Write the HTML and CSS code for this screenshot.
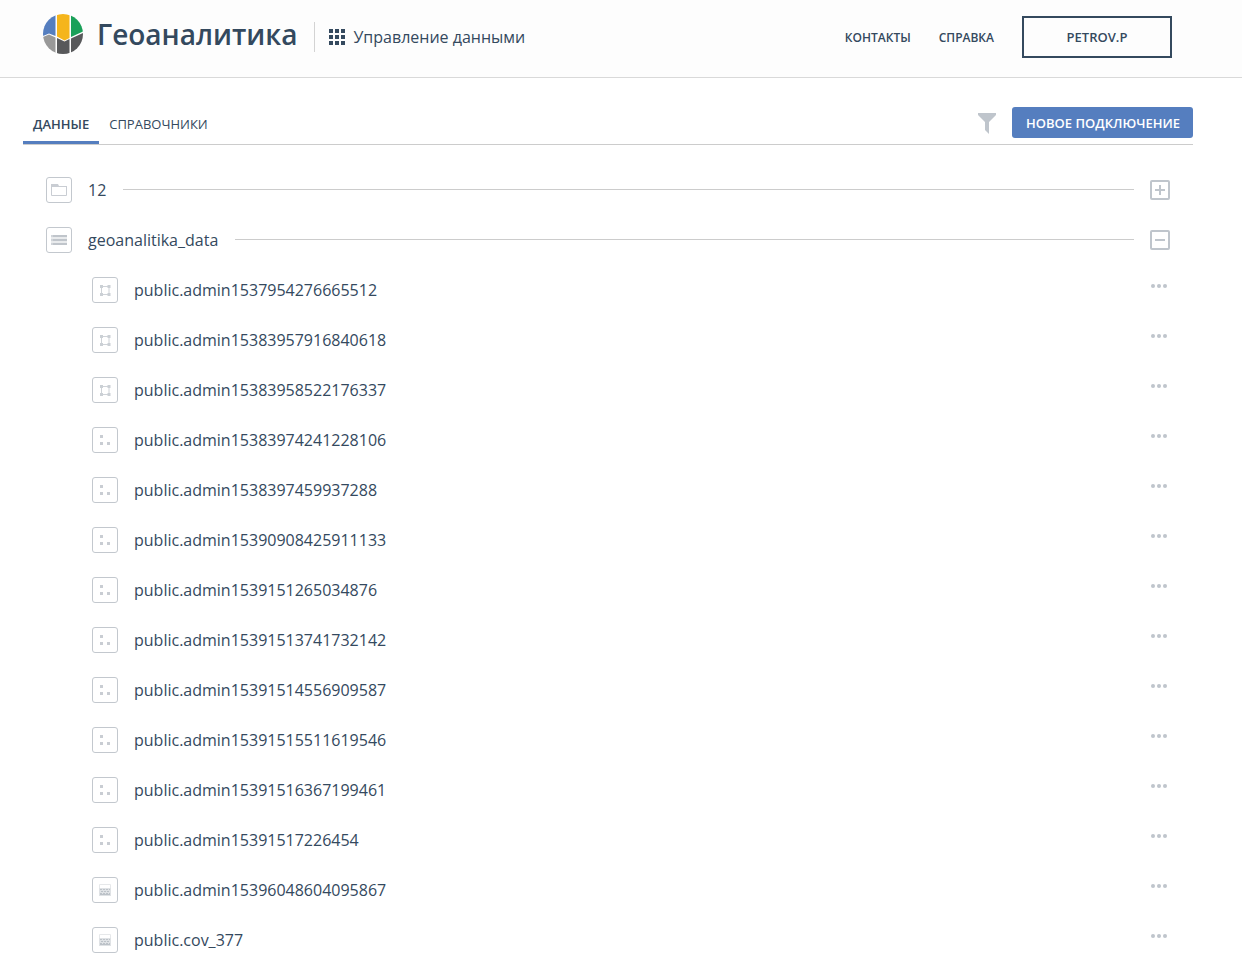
FILE: index.html
```
<!DOCTYPE html>
<html lang="ru">
<head>
<meta charset="utf-8">
<title>Геоаналитика</title>
<link rel="stylesheet" href="styles.css">
</head>
<body>
<svg class="sprite" aria-hidden="true">
  <symbol id="polygon" viewBox="0 0 26 26">
    <path d="M9.500 9.500h7.500v8h-7.500z" fill="none" stroke="#cfd3d8"/>
    <path d="M8 8h3v3H8zM15.500 8h3v3h-3zM8 16h3v3H8zM15.500 16h3v3h-3z" fill="#cbd0d5"/>
  </symbol>
  <symbol id="points" viewBox="0 0 26 26">
    <path d="M8 8h3v3H8zM8 15h3v3H8zM15 15h3v3h-3z" fill="#c9cdd3"/>
  </symbol>
  <symbol id="raster" viewBox="0 0 26 26">
    <path d="M7.500 18V7.500h11V18" fill="none" stroke="#e6e8ea"/>
    <path d="M7 11h12v8H7z" fill="#dfe2e5"/>
    <path d="M8 12h2v1H8zM11 12h2v1h-2zM14 12h2v1h-2zM17 12h1v1h-1zM9 14h2v1H9zM12 14h2v1h-2zM15 14h2v1h-2zM8 16h2v1H8zM11 16h2v1h-2zM14 16h2v1h-2zM17 16h1v1h-1zM8 17h10v1H8z" fill="#bcc2c8"/>
  </symbol>
  <symbol id="dots" viewBox="0 0 16 4">
    <circle cx="2" cy="2" r="2"/><circle cx="8" cy="2" r="2"/><circle cx="14" cy="2" r="2"/>
  </symbol>
</svg>

<header class="header">
  <a class="brand" href="#">
    <svg class="logo" viewBox="0 0 40 40" aria-hidden="true">
      <clipPath id="disc"><circle cx="20" cy="20" r="20"/></clipPath>
      <g clip-path="url(#disc)">
        <path d="M0 0h12.500v22L6 19.500 0 22z" fill="#557ebf"/>
        <path d="M0 23l6-2.500 6.500 3V40H0z" fill="#999"/>
        <path d="M14 0h12.500v24L21.500 26.500 14 22.500z" fill="#f5b51b"/>
        <path d="M14 24l7.500 3.500 5-2.500V40H14z" fill="#58595b"/>
        <path d="M28 0h12v17.500L28 23z" fill="#1aa059"/>
        <path d="M28 24.500L40 19v21H28z" fill="#58595b"/>
      </g>
    </svg>
    <span class="brand-name">Геоаналитика</span>
  </a>
  <a class="section" href="#">
    <svg class="apps" viewBox="0 0 16 16" aria-hidden="true"><path d="M0 0h4v4H0zM6 0h4v4H6zM12 0h4v4h-4zM0 6h4v4H0zM6 6h4v4H6zM12 6h4v4h-4zM0 12h4v4H0zM6 12h4v4H6zM12 12h4v4h-4z"/></svg>
    <span>Управление данными</span>
  </a>
  <nav class="links">
    <a href="#">КОНТАКТЫ</a>
    <a href="#">СПРАВКА</a>
  </nav>
  <button class="user" type="button">PETROV.P</button>
</header>

<main class="main">
  <div class="toolbar">
    <nav class="tabs">
      <a class="tab active" href="#">ДАННЫЕ</a>
      <a class="tab" href="#">СПРАВОЧНИКИ</a>
    </nav>
    <button class="filter" type="button" aria-label="Фильтр"><svg viewBox="0 0 18 21" aria-hidden="true"><path d="M0 0h18v2l-7 7v12l-4-4V9L0 2z"/></svg></button>
    <button class="connect" type="button">НОВОЕ ПОДКЛЮЧЕНИЕ</button>
  </div>

  <div class="tree">
    <div class="row">
      <span class="tile"><svg viewBox="0 0 26 26"><path d="M5.500 8v10.500h15V9.500h-8" fill="none" stroke="#c9cdd3"/><path d="M5 7h7l1 2h8v1H5z" fill="#c9cdd3"/></svg></span>
      <span class="name">12</span>
      <span class="line"></span>
      <button class="toggle" type="button" aria-label="Развернуть"><svg viewBox="0 0 20 20"><rect x="1" y="1" width="18" height="18" rx="1"/><path d="M5 10h10M10 5v10"/></svg></button>
    </div>
    <div class="row">
      <span class="tile"><svg viewBox="0 0 26 26"><path d="M5 8h2v2H5zM5 12h2v2H5zM5 16h2v2H5z" fill="#d0d4d9"/><path d="M7 8h14v2H7zM7 12h14v2H7zM7 16h14v2H7z" fill="#c0c5cb"/><path d="M5 10h16v2H5zM5 14h16v2H5z" fill="#e9ebed"/></svg></span>
      <span class="name">geoanalitika_data</span>
      <span class="line"></span>
      <button class="toggle" type="button" aria-label="Свернуть"><svg viewBox="0 0 20 20"><rect x="1" y="1" width="18" height="18" rx="1"/><path d="M5 10h10"/></svg></button>
    </div>
    <div class="children">
      <div class="row"><span class="tile"><svg><use href="#polygon"/></svg></span><span class="name">public.admin1537954276665512</span><button class="more" type="button" aria-label="Действия"><svg><use href="#dots"/></svg></button></div>
      <div class="row"><span class="tile"><svg><use href="#polygon"/></svg></span><span class="name">public.admin15383957916840618</span><button class="more" type="button" aria-label="Действия"><svg><use href="#dots"/></svg></button></div>
      <div class="row"><span class="tile"><svg><use href="#polygon"/></svg></span><span class="name">public.admin15383958522176337</span><button class="more" type="button" aria-label="Действия"><svg><use href="#dots"/></svg></button></div>
      <div class="row"><span class="tile"><svg><use href="#points"/></svg></span><span class="name">public.admin15383974241228106</span><button class="more" type="button" aria-label="Действия"><svg><use href="#dots"/></svg></button></div>
      <div class="row"><span class="tile"><svg><use href="#points"/></svg></span><span class="name">public.admin1538397459937288</span><button class="more" type="button" aria-label="Действия"><svg><use href="#dots"/></svg></button></div>
      <div class="row"><span class="tile"><svg><use href="#points"/></svg></span><span class="name">public.admin15390908425911133</span><button class="more" type="button" aria-label="Действия"><svg><use href="#dots"/></svg></button></div>
      <div class="row"><span class="tile"><svg><use href="#points"/></svg></span><span class="name">public.admin1539151265034876</span><button class="more" type="button" aria-label="Действия"><svg><use href="#dots"/></svg></button></div>
      <div class="row"><span class="tile"><svg><use href="#points"/></svg></span><span class="name">public.admin15391513741732142</span><button class="more" type="button" aria-label="Действия"><svg><use href="#dots"/></svg></button></div>
      <div class="row"><span class="tile"><svg><use href="#points"/></svg></span><span class="name">public.admin15391514556909587</span><button class="more" type="button" aria-label="Действия"><svg><use href="#dots"/></svg></button></div>
      <div class="row"><span class="tile"><svg><use href="#points"/></svg></span><span class="name">public.admin15391515511619546</span><button class="more" type="button" aria-label="Действия"><svg><use href="#dots"/></svg></button></div>
      <div class="row"><span class="tile"><svg><use href="#points"/></svg></span><span class="name">public.admin15391516367199461</span><button class="more" type="button" aria-label="Действия"><svg><use href="#dots"/></svg></button></div>
      <div class="row"><span class="tile"><svg><use href="#points"/></svg></span><span class="name">public.admin15391517226454</span><button class="more" type="button" aria-label="Действия"><svg><use href="#dots"/></svg></button></div>
      <div class="row"><span class="tile"><svg><use href="#raster"/></svg></span><span class="name">public.admin15396048604095867</span><button class="more" type="button" aria-label="Действия"><svg><use href="#dots"/></svg></button></div>
      <div class="row"><span class="tile"><svg><use href="#raster"/></svg></span><span class="name">public.cov_377</span><button class="more" type="button" aria-label="Действия"><svg><use href="#dots"/></svg></button></div>
    </div>
  </div>
</main>
</body>
</html>
```

FILE: styles.css
```
* {
  box-sizing: border-box;
}

body {
  margin: 0;
  background: #fff;
  color: #34495e;
  font: 16px/24px "Open Sans", "Noto Sans", sans-serif;
}

a {
  color: inherit;
  text-decoration: none;
}

button {
  margin: 0;
  padding: 0;
  border: 0;
  background: none;
  color: inherit;
  font: inherit;
  cursor: pointer;
}

svg {
  display: block;
}

.sprite {
  position: absolute;
  width: 0;
  height: 0;
}

.header {
  display: flex;
  align-items: center;
  height: 78px;
  padding: 0 70px 4px 43px;
  border-bottom: 1px solid #d9d9d9;
  background: #fdfdfd;
}

.brand {
  display: flex;
  align-items: center;
  gap: 14px;
  padding-bottom: 6px;
}

.logo {
  width: 40px;
  height: 40px;
}

.brand-name {
  font-size: 28px;
  line-height: 40px;
  font-weight: 600;
}

.section {
  display: flex;
  align-items: center;
  gap: 8px;
  height: 30px;
  margin-left: 17px;
  padding-left: 14px;
  border-left: 1px solid #d3d3d3;
}

.apps {
  width: 16px;
  height: 16px;
  fill: #34495e;
}

.links {
  display: flex;
  gap: 28px;
  margin-left: auto;
  padding-top: 2px;
  font-size: 12px;
  font-weight: 600;
}

.user {
  width: 150px;
  height: 42px;
  margin-left: 28px;
  border: 2px solid #34495e;
  font-size: 13px;
  font-weight: 600;
}

.main {
  padding: 22px 49px 0 23px;
}

.toolbar {
  display: flex;
  align-items: center;
  height: 45px;
  border-bottom: 1px solid #ccc;
}

.tabs {
  display: flex;
  align-self: stretch;
  margin-right: auto;
  font-size: 13px;
}

.tab {
  display: flex;
  align-items: center;
  padding: 6px 10px 0;
  border-bottom: 3px solid transparent;
}

.tab.active {
  border-color: #557ebf;
  font-weight: 600;
}

.filter {
  padding-top: 2px;
  margin-right: 16px;
}

.filter svg {
  width: 18px;
  height: 21px;
  fill: #bfc5cc;
}

.connect {
  height: 31px;
  padding: 1px 13px 0 14px;
  border-radius: 3px;
  background: #557ebf;
  color: #fff;
  font-size: 13px;
  font-weight: 600;
}

.tree {
  padding: 20px 23px 0;
}

.row {
  display: flex;
  align-items: center;
  height: 50px;
}

.tile {
  flex: none;
  width: 26px;
  height: 26px;
  border: 1px solid #c3c8ce;
  border-radius: 3px;
}

.tile svg {
  width: 26px;
  height: 26px;
  margin: -1px;
}

.name {
  margin-left: 16px;
}

.line {
  flex: 1;
  height: 1px;
  margin: 0 16px 1px 17px;
  background: #ccc;
}

.toggle svg {
  width: 20px;
  height: 20px;
  fill: none;
  stroke: #bfc5cc;
  stroke-width: 2;
}

.children {
  padding-left: 46px;
}

.more {
  margin-left: auto;
  padding: 0 3px 8px;
}

.more svg {
  width: 16px;
  height: 4px;
  fill: #bfc5cc;
}
```
